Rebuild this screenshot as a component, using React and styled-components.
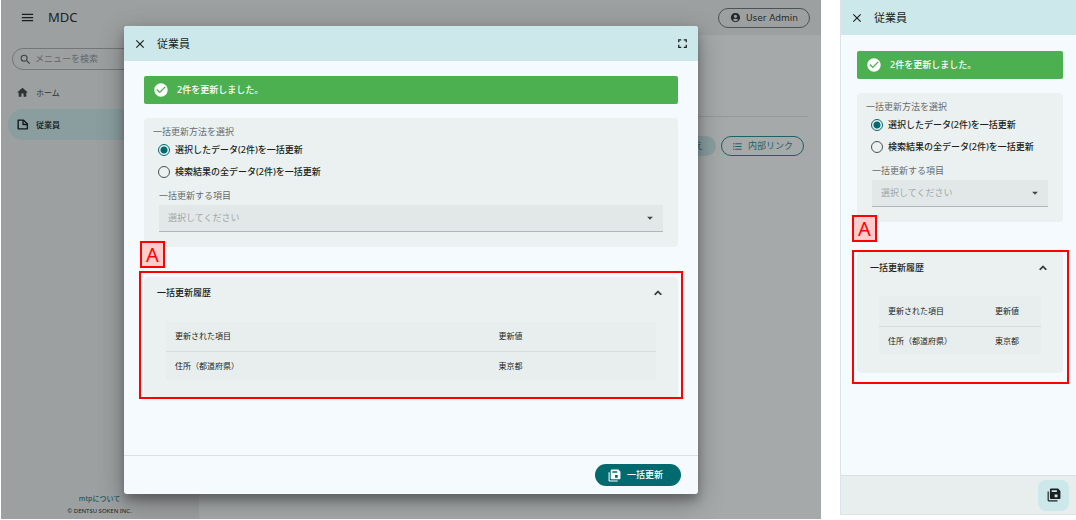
import React, { useId, useState } from "react";
import styled, { createGlobalStyle, css } from "styled-components";
import {
  MdAccountCircle,
  MdArrowDropDown,
  MdCheckCircle,
  MdClose,
  MdExpandLess,
  MdFormatListBulleted,
  MdFullscreen,
  MdHome,
  MdMenu,
  MdSearch,
} from "react-icons/md";

const GlobalStyle = createGlobalStyle`
  * { box-sizing: border-box; }
  body {
    margin: 0;
    background: #fff;
    color: #1b1f20;
    font-family: "Noto Sans", "Noto Sans CJK JP", sans-serif;
    font-size: 9px;
    line-height: 14px;
  }
  button, input, select { font: inherit; color: inherit; }
  button { border: 0; background: none; padding: 0; cursor: pointer; }
  svg { display: block; flex: none; }
`;

const Screens = styled.main`
  display: grid;
  grid-template-columns: minmax(0, 1fr) 236px;
  gap: 19px;
  padding-left: 1px;
  align-items: start;
`;

/* Desktop page behind the dialog */
const Desktop = styled.section`
  position: relative;
  display: flex;
  flex-direction: column;
  min-height: calc(100vh - 1px);
  background: #a5a9aa;
  overflow: hidden;
`;

const AppBar = styled.header`
  display: flex;
  align-items: center;
  gap: 13px;
  height: 35px;
  padding: 0 11px 0 19px;
  background: #9da0a1;
`;

const Brand = styled.h1`
  margin: 0;
  flex: 1;
  font-size: 13px;
  font-weight: 400;
  line-height: 16px;
  padding-bottom: 2px;
`;

const IconButton = styled.button`
  display: flex;
`;

const OutlinePill = styled.button`
  display: flex;
  align-items: center;
  justify-content: center;
  gap: 5px;
  height: 20px;
  padding: 0 ${(p) => p.$pad}px;
  border: 1px solid ${(p) => p.$color};
  border-radius: 10px;
  color: ${(p) => p.$text || p.$color};
  white-space: nowrap;
  ${(p) => p.$latin && css`font-family: "DejaVu Sans", sans-serif;`}
`;

const PageBody = styled.div`
  display: flex;
  flex: 1;
`;

const Sidebar = styled.nav`
  display: flex;
  flex-direction: column;
  width: 198px;
  padding: 13px 8px 2px 7px;
  background: #9da0a1;
`;

const SearchBox = styled.label`
  display: flex;
  align-items: center;
  gap: 3px;
  height: 22px;
  margin: 0 3px 6px 4px;
  padding: 0 6px;
  border: 1px solid #737778;
  border-radius: 11px;
  color: #3c4142;
`;

const SearchInput = styled.input`
  width: 100%;
  min-width: 0;
  padding: 0;
  border: 0;
  outline: 0;
  background: none;
  &::placeholder { color: #626667; opacity: 1; }
`;

const NavLink = styled.a`
  display: flex;
  align-items: center;
  gap: 7px;
  height: ${(p) => (p.$active ? 31 : 33)}px;
  padding: 0 8px;
  border-radius: 15px;
  background: ${(p) => (p.$active ? "#8a9ea0" : "none")};
  color: ${(p) => (p.$active ? "#111718" : "#2e3334")};
  font-size: 8px;
  font-weight: ${(p) => (p.$active ? 500 : 400)};
  text-decoration: none;
`;

const SidebarFooter = styled.footer`
  margin-top: auto;
  font-size: 6px;
  line-height: 12px;
  text-align: center;
`;

const AboutLink = styled.a`
  display: block;
  color: #1c5558;
  font-size: 7px;
  font-weight: 500;
  text-decoration: none;
`;

const Content = styled.div`
  flex: 1;
  padding: 81px 13px 0;
`;

const ActionRow = styled.div`
  display: flex;
  justify-content: flex-end;
  gap: 5px;
  padding: 19px 4px 0;
  border-top: 1px solid #94999a;
`;

const TonalPill = styled.button`
  height: 20px;
  padding: 0 13px;
  border-radius: 10px;
  background: #8a9ea0;
  color: #1c5d61;
`;

const Backdrop = styled.div`
  position: absolute;
  inset: 0;
  display: grid;
  padding: 26px 15% 25px;
`;

/* Dialog, shared by the desktop and phone layouts */
const DialogFrame = styled.section`
  display: flex;
  flex-direction: column;
  min-width: 0;
  background: #f4fafd;
  ${(p) =>
    p.$compact
      ? css`
          min-height: calc(100vh - 5px);
          border-left: 1px solid #dfe2ec;
          border-bottom: 1px solid #dde2e3;
        `
      : css`
          border-radius: 3px;
          box-shadow: 0 6px 10px rgba(0, 0, 0, 0.25), 0 8px 28px rgba(0, 0, 0, 0.3);
          overflow: hidden;
        `}
`;

const DialogHeader = styled.header`
  display: flex;
  align-items: center;
  gap: 10px;
  height: 35px;
  padding: 0 8px 0 9px;
  background: #cde8eb;
`;

const DialogTitle = styled.h2`
  flex: 1;
  margin: 0;
  font-size: 11px;
  font-weight: 400;
  line-height: 16px;
`;

const DialogBody = styled.div`
  flex: 1;
  padding: ${(p) => (p.$compact ? "16px 13px 0 16px" : "15px 20px 0")};
`;

const Alert = styled.div`
  display: flex;
  align-items: center;
  gap: 8px;
  height: 28px;
  margin-bottom: 14px;
  padding: 0 9px;
  border-radius: 2px;
  background: #4caf50;
  color: #fff;
  font-weight: 500;
`;

const Card = styled.div`
  border-radius: 4px;
  background: #ebf1f1;
`;

const Form = styled(Card).attrs({ as: "form" })`
  display: block;
  margin-bottom: 30px;
  padding: 7px 15px 15px;
`;

const RadioGroup = styled.fieldset`
  margin: 0 0 6px -1px;
  padding: 0;
  border: 0;
`;

const Legend = styled.legend`
  margin-left: -5px;
  padding: 0;
  color: #666c6d;
`;

const RadioLabel = styled.label`
  display: flex;
  align-items: center;
  gap: 5px;
  height: 22px;
  font-weight: 500;
`;

const Radio = styled.input`
  appearance: none;
  flex: none;
  width: 12px;
  height: 12px;
  margin: 0;
  border: 1px solid #4b5152;
  border-radius: 50%;
  &:checked {
    border-color: #006a6f;
    background: radial-gradient(circle, #006a6f 3px, transparent 4px);
  }
`;

const FieldLabel = styled.label`
  display: block;
  margin-bottom: 2px;
  color: #666c6d;
`;

const SelectBox = styled.div`
  display: grid;
  align-items: center;
  height: 27px;
  border-bottom: 1px solid #b0b6b7;
  border-radius: 2px 2px 0 0;
  background: #e2e8e8;
  & > * { grid-area: 1 / 1; }
  & > svg { justify-self: end; margin-right: 6px; pointer-events: none; color: #3f4647; }
`;

const Select = styled.select`
  appearance: none;
  width: 100%;
  height: 26px;
  padding: 0 24px 0 9px;
  border: 0;
  outline: 0;
  background: none;
  color: #a1a7a8;
`;

const History = styled.div`
  position: relative;
`;

const HistoryCard = styled(Card)`
  padding-bottom: 18px;
`;

const HistoryToggle = styled.button`
  display: flex;
  align-items: center;
  justify-content: space-between;
  width: 100%;
  height: 31px;
  padding: 0 13px;
  font-weight: 500;
  & path:not([fill="none"]) { stroke: currentColor; stroke-width: 1px; }
`;

const TableArea = styled.div`
  padding: 13px 22px 0;
`;

const Table = styled.table`
  width: 100%;
  table-layout: fixed;
  border-collapse: collapse;
  background: #e8eeee;
  font-size: 8px;
  line-height: 12px;
`;

const Row = styled.tr`
  height: ${(p) => (p.$head ? 30 : 29)}px;
  ${(p) => p.$head && css`border-bottom: 1px solid #d7dddd;`}
`;

const cell = css`
  padding: 0 0 0 9px;
  font-weight: 400;
  text-align: left;
  white-space: nowrap;
  &:first-child { width: 66%; }
`;
const HeadCell = styled.th`${cell}`;
const Cell = styled.td`${cell}`;

const Outline = styled.div`
  position: absolute;
  inset: ${(p) => (p.$compact ? "-2px -6px -11px -5px" : "-6px -5px -1px")};
  border: 2px solid #f00;
  pointer-events: none;
`;

const Marker = styled.span`
  position: absolute;
  top: ${(p) => (p.$compact ? -37 : -36)}px;
  left: ${(p) => (p.$compact ? -5 : -4)}px;
  width: 25px;
  height: 27px;
  border: 2px solid #f00;
  background: #fcc;
  color: #f00;
  font-family: "Noto Sans", sans-serif;
  font-size: 20px;
  line-height: 24px;
  text-align: center;
`;

const DialogFooter = styled.footer`
  display: flex;
  align-items: center;
  justify-content: flex-end;
  height: 39px;
  border-top: 1px solid #dbe1e3;
  padding-right: ${(p) => (p.$compact ? 7 : 17)}px;
  background: ${(p) => (p.$compact ? "#e8eeee" : "none")};
`;

const SubmitButton = styled.button`
  display: flex;
  align-items: center;
  justify-content: center;
  gap: 6px;
  height: 22px;
  padding: 0 18px 0 13px;
  border-radius: 11px;
  background: #006a6f;
  color: #fff;
  font-weight: 500;
`;

const SubmitIconButton = styled.button`
  display: grid;
  place-items: center;
  width: 31px;
  height: 31px;
  border-radius: 8px;
  background: #cde8eb;
`;

function SaveAllIcon({ size }) {
  return (
    <svg width={size} height={size} viewBox="0 0 24 24" fill="currentColor" fillRule="evenodd" aria-hidden="true">
      <path d="M19,1L23,5V17A2,2 0 0,1 21,19H7C5.89,19 5,18.1 5,17V3A2,2 0 0,1 7,1H19M8,4V7H17V4H8M13,11V16H18V11H13Z" />
      <path d="M1,6H3V21H18V23H3A2,2 0 0,1 1,21V6Z" />
    </svg>
  );
}

function NoteIcon({ size }) {
  return (
    <svg width={size} height={size} viewBox="0 0 24 24" fill="none" stroke="currentColor" strokeWidth="2.5" strokeLinejoin="round" aria-hidden="true">
      <path d="M4,4H14L21,11V20H4Z" />
      <path d="M13,4V12H21" />
    </svg>
  );
}

function BulkUpdateDialog({ compact }) {
  const id = useId();
  const [target, setTarget] = useState("selected");
  const [open, setOpen] = useState(true);

  return (
    <DialogFrame role="dialog" aria-labelledby={`${id}-title`} $compact={compact}>
      <DialogHeader>
        <IconButton type="button" aria-label="閉じる"><MdClose size={14} /></IconButton>
        <DialogTitle id={`${id}-title`}>従業員</DialogTitle>
        {!compact && (
          <IconButton type="button" aria-label="全画面"><MdFullscreen size={15} /></IconButton>
        )}
      </DialogHeader>
      <DialogBody $compact={compact}>
        <Alert role="status"><MdCheckCircle size={16} />2件を更新しました。</Alert>
        <Form>
          <RadioGroup>
            <Legend>一括更新方法を選択</Legend>
            <RadioLabel>
              <Radio type="radio" name={`${id}-target`} checked={target === "selected"} onChange={() => setTarget("selected")} />
              選択したデータ(2件)を一括更新
            </RadioLabel>
            <RadioLabel>
              <Radio type="radio" name={`${id}-target`} checked={target === "all"} onChange={() => setTarget("all")} />
              検索結果の全データ(2件)を一括更新
            </RadioLabel>
          </RadioGroup>
          <FieldLabel htmlFor={`${id}-item`}>一括更新する項目</FieldLabel>
          <SelectBox>
            <Select id={`${id}-item`} defaultValue="">
              <option value="">選択してください</option>
            </Select>
            <MdArrowDropDown size={14} />
          </SelectBox>
        </Form>
        <History>
          <HistoryCard>
            <HistoryToggle type="button" aria-expanded={open} onClick={() => setOpen(!open)}>
              一括更新履歴<MdExpandLess size={14} />
            </HistoryToggle>
            {open && (
              <TableArea>
                <Table>
                  <thead>
                    <Row $head>
                      <HeadCell scope="col">更新された項目</HeadCell>
                      <HeadCell scope="col">更新値</HeadCell>
                    </Row>
                  </thead>
                  <tbody>
                    <Row>
                      <Cell>住所（都道府県）</Cell>
                      <Cell>東京都</Cell>
                    </Row>
                  </tbody>
                </Table>
              </TableArea>
            )}
          </HistoryCard>
          <Outline $compact={compact} />
          <Marker $compact={compact}>A</Marker>
        </History>
      </DialogBody>
      <DialogFooter $compact={compact}>
        {compact ? (
          <SubmitIconButton type="button" aria-label="一括更新"><SaveAllIcon size={14} /></SubmitIconButton>
        ) : (
          <SubmitButton type="button"><SaveAllIcon size={13} />一括更新</SubmitButton>
        )}
      </DialogFooter>
    </DialogFrame>
  );
}

export default function App() {
  return (
    <>
      <GlobalStyle />
      <Screens>
        <Desktop>
          <AppBar>
            <IconButton type="button" aria-label="メニュー"><MdMenu size={15} /></IconButton>
            <Brand>MDC</Brand>
            <OutlinePill type="button" $pad={11} $color="#4d5253" $text="#26292a" $latin>
              <MdAccountCircle size={11} />User Admin
            </OutlinePill>
          </AppBar>
          <PageBody>
            <Sidebar>
              <SearchBox>
                <MdSearch size={13} />
                <SearchInput type="search" placeholder="メニューを検索" aria-label="メニューを検索" />
              </SearchBox>
              <NavLink href="#home"><MdHome size={13} />ホーム</NavLink>
              <NavLink href="#employees" $active><NoteIcon size={13} />従業員</NavLink>
              <SidebarFooter>
                <AboutLink href="#about">mtpについて</AboutLink>
                © DENTSU SOKEN INC.
              </SidebarFooter>
            </Sidebar>
            <Content>
              <ActionRow>
                <TonalPill type="button">並び替え</TonalPill>
                <OutlinePill type="button" $pad={10} $color="#1c6266">
                  <MdFormatListBulleted size={11} />内部リンク
                </OutlinePill>
              </ActionRow>
            </Content>
          </PageBody>
          <Backdrop><BulkUpdateDialog /></Backdrop>
        </Desktop>
        <BulkUpdateDialog compact />
      </Screens>
    </>
  );
}
